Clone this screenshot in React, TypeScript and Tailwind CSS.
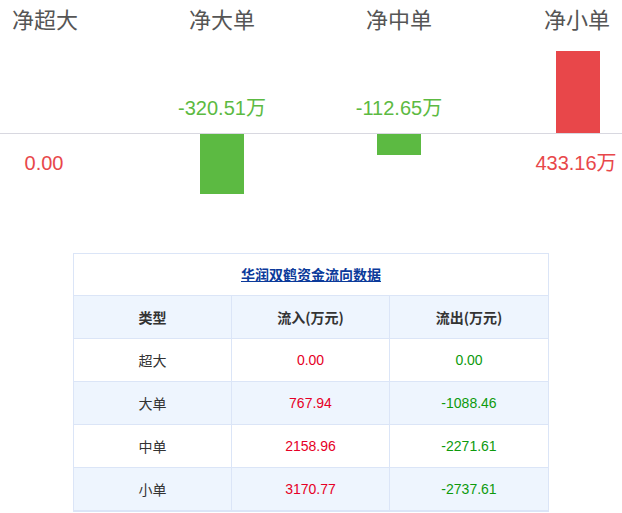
export default function App() {
  const f = '"Noto Sans CJK SC", "Liberation Sans", sans-serif';
  const rows = [
    ["超大", "0.00", "0.00"],
    ["大单", "767.94", "-1088.46"],
    ["中单", "2158.96", "-2271.61"],
    ["小单", "3170.77", "-2737.61"],
  ];
  return (
    <div className="w-[622px] h-[513px] bg-white overflow-hidden" style={{ fontFamily: '"Liberation Sans", sans-serif' }}>
      <svg width="622" height="210" className="block">
        <g fontFamily={f} fontSize="22" fill="#555">
          <text x="45" y="28" textAnchor="middle">净超大</text>
          <text x="222" y="28" textAnchor="middle">净大单</text>
          <text x="399" y="28" textAnchor="middle">净中单</text>
          <text x="577" y="28" textAnchor="middle">净小单</text>
        </g>
        <line x1="0" y1="133.5" x2="622" y2="133.5" stroke="#d8d8e0" />
        <rect x="200" y="134" width="44" height="60" fill="#5cba42" />
        <rect x="377" y="134" width="44" height="21" fill="#5cba42" />
        <rect x="556" y="51" width="44" height="82" fill="#e8474a" />
        <g fontFamily='"Liberation Sans", "Noto Sans CJK SC", sans-serif' fontSize="20">
          <text x="222" y="115" textAnchor="middle" fill="#5cba42">-320.51万</text>
          <text x="399" y="115" textAnchor="middle" fill="#5cba42">-112.65万</text>
          <text x="44" y="170" textAnchor="middle" fill="#e8474a">0.00</text>
          <text x="576" y="170" textAnchor="middle" fill="#e8474a">433.16万</text>
        </g>
      </svg>
      <div className="ml-[73px] mt-[43px] w-[476px] border border-[#dbe5f7] text-[14px] text-[#333]" style={{ fontFamily: f }}>
        <div className="h-[42px] flex items-center justify-center border-b border-[#dbe5f7]">
          <span className="font-bold text-[#0b3a9a] underline">华润双鹤资金流向数据</span>
        </div>
        <div className="grid grid-cols-3 h-[43px] bg-[#eef5fe] border-b border-[#dbe5f7] font-bold">
          <div className="flex items-center justify-center border-r border-[#dbe5f7]">类型</div>
          <div className="flex items-center justify-center border-r border-[#dbe5f7]">流入(万元)</div>
          <div className="flex items-center justify-center">流出(万元)</div>
        </div>
        {rows.map((r, i) => (
          <div key={i} className={`grid grid-cols-3 h-[43px] border-b border-[#dbe5f7] ${i % 2 === 1 ? "bg-[#eef5fe]" : "bg-white"}`}>
            <div className="flex items-center justify-center border-r border-[#dbe5f7]">{r[0]}</div>
            <div className="flex items-center justify-center border-r border-[#dbe5f7] text-[#e60026]" style={{ fontFamily: '"Liberation Sans", sans-serif' }}>{r[1]}</div>
            <div className="flex items-center justify-center text-[#0d9a0d]" style={{ fontFamily: '"Liberation Sans", sans-serif' }}>{r[2]}</div>
          </div>
        ))}
      </div>
    </div>
  );
}
